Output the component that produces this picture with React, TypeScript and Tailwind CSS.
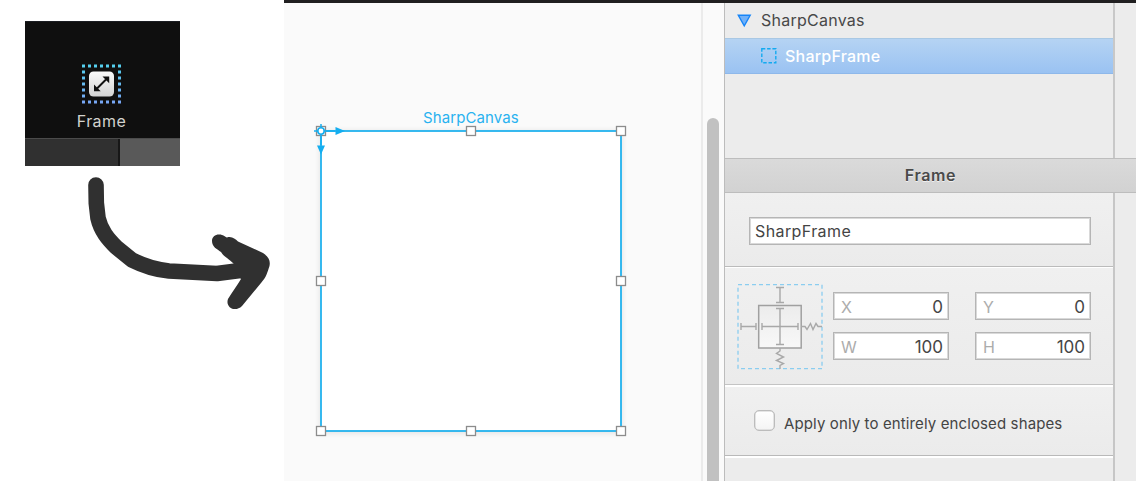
import React from "react";

const DOTS = [0, 6, 12, 18, 24, 30, 36];

function FrameToolIcon() {
  return (
    <svg width="40" height="40" viewBox="0 0 40 40" className="block">
      <defs>
        <linearGradient id="tool" x1="0" y1="0" x2="0" y2="1">
          <stop offset="0" stopColor="#fafafa" />
          <stop offset="1" stopColor="#d2d2d2" />
        </linearGradient>
        <linearGradient id="dots" gradientUnits="userSpaceOnUse" x1="0" y1="0" x2="0" y2="39">
          <stop offset="0" stopColor="#53d2ef" />
          <stop offset="1" stopColor="#78a6f5" />
        </linearGradient>
      </defs>
      {DOTS.map((y) =>
        DOTS.map((x) =>
          x === 0 || x === 36 || y === 0 || y === 36 ? (
            <rect key={`${x}-${y}`} x={x} y={y + 0.5} width="3" height="3" fill="url(#dots)" />
          ) : null
        )
      )}
      <rect x="7" y="7.5" width="25" height="25" rx="4.5" fill="url(#tool)" />
      <path d="M15 24.5 L24 15.5" stroke="#101010" strokeWidth="2" />
      <path d="M12 20.6 V27.3 H18.7 Z M20.5 12.6 H27.2 V19.3 Z" fill="#101010" />
    </svg>
  );
}

function ToolPreview() {
  return (
    <div className="w-[155px] h-[145px] bg-[#0f0f0f] border-t border-[#1b1d22] flex flex-col">
      <div className="h-[116px] flex flex-col items-center pt-[42px] pr-[2px]">
        <FrameToolIcon />
        <span className="mt-[6px] text-[16px] leading-[22px] tracking-[0.45px] text-[#d2d2ce]">Frame</span>
      </div>
      <div className="flex-1 flex border-t border-[#4b4b4b]">
        <div className="w-[93px] bg-[#303030]" />
        <div className="w-[2px] bg-[#171717]" />
        <div className="flex-1 bg-[#595959]" />
      </div>
    </div>
  );
}

function HandDrawnArrow() {
  return (
    <svg width="190" height="140" viewBox="84 174 190 140" className="block ml-[59px] mt-[8px]">
      <path
        d="M96 185 L96.3 203 L98 218 C101 231 108 239 116 247 L132 260 C144 266 158 270 169 271 L217 273.500 L244 270"
        fill="none"
        stroke="#303030"
        strokeWidth="15.6"
        strokeLinecap="round"
        strokeLinejoin="round"
      />
      <path
        d="M219 234.500 C223 234.300 225 237 227 237.500 C232 236 235 239 238 241.500 L263 253 C269 257 270.500 261 269.500 266 C267 273 267 276 261 283 L242 306 C235 313 225 307 228 299 C232 292 237 286 241 279 L229 264 L234 264 C228 258 224 257 221 252 C217 249 212 247 212 241 C212 237 215 234.500 219 234.500 Z"
        fill="#303030"
      />
    </svg>
  );
}

function SelectionHandles() {
  const points = [
    [10, 10], [160, 10], [310, 10],
    [10, 160], [310, 160],
    [10, 310], [160, 310], [310, 310],
  ];
  return (
    <svg width="320" height="320" viewBox="0 0 320 320" className="absolute left-[27px] top-[118px]">
      <rect x="10" y="10" width="300" height="300" fill="none" stroke="#22b2ee" strokeWidth="1.800" />
      {points.map(([x, y]) => (
        <rect key={`${x}-${y}`} x={x - 4.5} y={y - 4.5} width="9" height="9" fill="#fff" stroke="#8c8c8c" strokeWidth="1.300" />
      ))}
      <g fill="#14aef0" stroke="#14aef0">
        <path d="M3 10 H24 M10 3 V24" strokeWidth="1.500" />
        <path d="M24.500 6 L34 10 L24.500 14 Z M6 24.500 L14 24.500 L10 33.500 Z" stroke="none" />
        <circle cx="10" cy="10" r="3.200" fill="#fff" strokeWidth="1.600" />
      </g>
    </svg>
  );
}

function CanvasArea() {
  return (
    <div className="w-[441px] flex-none flex bg-[#fafafa]">
      <div className="w-[419px] relative border-r-2 border-[#ebebeb] overflow-hidden">
        <div className="absolute left-[37px] top-[128px] w-[300px] h-[300px] bg-white shadow-[0_1px_5px_2px_rgba(0,0,0,0.08)]" />
        <span className="absolute left-[139px] top-[104px] text-[15px] leading-[22px] tracking-[0.1px] whitespace-nowrap text-[#29b2f0]">
          SharpCanvas
        </span>
        <SelectionHandles />
      </div>
      <div className="w-[22px] bg-[#fafafa] pt-[115px] pl-[4px] border-r border-[#bcbcbc]">
        <div className="w-[12px] h-full rounded-t-full bg-[#c1c1c1]" />
      </div>
    </div>
  );
}

function ConstraintsDiagram() {
  return (
    <svg width="86" height="86" viewBox="0 0 86 86" className="block shrink-0">
      <defs>
        <linearGradient id="box" x1="0" y1="0" x2="0" y2="1">
          <stop offset="0" stopColor="#ececec" />
          <stop offset="1" stopColor="#f8f8f8" />
        </linearGradient>
      </defs>
      <rect x="1" y="0.700" width="84" height="84" fill="none" stroke="#8bcdf0" strokeWidth="1.300" strokeDasharray="4 3" />
      <rect x="21.700" y="21.500" width="42.500" height="42.500" fill="url(#box)" stroke="#a0a0a0" strokeWidth="1.500" />
      <g fill="none" stroke="#a8a8a8" strokeWidth="1.400">
        <path d="M43 3.500 V18.500 M39 3.500 H47 M39 18.500 H47" />
        <path d="M43 24.500 V60.500 M39 24.500 H47 M39 60.500 H47" />
        <path d="M4 42.500 H19 M4 39 V46 M19 39 V46" />
        <path d="M25 42.500 H61 M25 39 V46 M61 39 V46" />
        <path d="M64 42.500 H68 L70 45.500 L73.500 39.500 L76 45.500 L79 39.500 L81 42.500 H85" />
        <path d="M43 64 V67 L39.500 69.500 L46.500 73 L39.500 76.500 L46.500 79.500 L43 81.500 V85" />
      </g>
    </svg>
  );
}

function NumberField({ label, value }: { label: string; value: string }) {
  return (
    <div className="h-[28px] w-[116px] border border-[#b5b5b5] outline outline-1 -outline-offset-2 outline-[#d9d9d9] bg-white pl-[7px] pr-[5px] flex items-center justify-between text-[17px] leading-[22px]">
      <span className="text-[#acacac] text-[16px] pt-[1px]">{label}</span>
      <span className="text-[#454545] pt-[1px]">{value}</span>
    </div>
  );
}

function LayerList() {
  return (
    <div className="h-[155px] w-[390px] border-r-2 border-[#c8c8c8]">
      <div className="h-[35px] flex items-center pl-[12px]">
        <svg width="15" height="14" viewBox="0 0 15 14" className="block">
          <path d="M1.300 1.300 H13.200 L7.250 11.800 Z" fill="#71b1f8" stroke="#1685f8" strokeWidth="1.400" />
        </svg>
        <span className="ml-[9px] mt-[-2px] text-[16px] leading-[22px] tracking-[0.25px] text-[#484848]">SharpCanvas</span>
      </div>
      <div className="h-[36px] flex items-center pl-[36px] bg-linear-to-b from-[#b5d3f3] to-[#9ac2f2] border-t border-b border-t-[#a9c8e4] border-b-[#8eb8ea]">
        <svg width="16" height="16" viewBox="0 0 16 16" className="block">
          <rect x="0.800" y="0.800" width="14" height="14" fill="none" stroke="#13aaf0" strokeWidth="1.400" strokeDasharray="3.500 1.800" />
        </svg>
        <span className="ml-[8px] mt-[-1px] text-[16px] leading-[22px] tracking-[0.22px] font-medium text-white">SharpFrame</span>
      </div>
    </div>
  );
}

function Inspector() {
  return (
    <div className="w-[411px] flex-none bg-[#ececec] flex flex-col">
      <LayerList />
      <div className="h-[35px] flex-none bg-linear-to-b from-[#dadada] to-[#d2d2d2] border-t border-b border-t-[#bdbdbd] border-b-[#bdbdbd] flex items-center justify-center">
        <span className="mt-[-2px] text-[16px] leading-[22px] font-semibold text-[#4a4a4a] tracking-[0.6px] [text-shadow:0_1px_0_#f0f0f0]">Frame</span>
      </div>
      <div className="w-[390px] flex-1 flex flex-col border-r-2 border-[#c6c6c6]">
        <div className="h-[74px] bg-linear-to-b from-[#f0f0f0] to-[#ebebeb] border-b border-[#bbbbbb] pt-[24px] pl-[24px]">
          <div className="w-[342px] h-[28px] border border-[#b5b5b5] outline outline-1 -outline-offset-2 outline-[#d9d9d9] bg-white pl-[5px] flex items-center text-[16px] leading-[22px] tracking-[0.4px] text-[#444]">
            <span>SharpFrame</span>
          </div>
        </div>
        <div className="h-[118px] bg-linear-to-b from-[#f0f0f0] to-[#ebebeb] border-t border-b border-t-white border-b-[#c4c4c4] pt-[16px] pl-[12px] flex">
          <ConstraintsDiagram />
          <div className="ml-[10px] mt-[8px] grid grid-cols-[116px_116px] gap-x-[26px] gap-y-[12px] content-start">
            <NumberField label="X" value="0" />
            <NumberField label="Y" value="0" />
            <NumberField label="W" value="100" />
            <NumberField label="H" value="100" />
          </div>
        </div>
        <div className="h-[71px] bg-linear-to-b from-[#f0f0f0] to-[#ebebeb] border-t-2 border-b border-t-white border-b-[#b9b9b9] flex items-start pt-[23px] pl-[29px]">
          <div className="w-[21px] h-[21px] rounded-[5px] border-[1.5px] border-[#bcbcbc] shadow-[inset_0_0_0_0.5px_#cccccc] bg-linear-to-b from-white to-[#f4f4f4]" />
          <span className="ml-[9px] mt-[3px] text-[15px] leading-[22px] tracking-[0.12px] text-[#444] whitespace-nowrap">
            Apply only to entirely enclosed shapes
          </span>
        </div>
        <div className="flex-1 border-t-2 border-white" />
      </div>
    </div>
  );
}

export default function App() {
  return (
    <div className="w-[1136px] h-[481px] bg-white flex overflow-hidden font-['Inter','Liberation_Sans',sans-serif]">
      <div className="w-[284px] flex-none pt-[21px]">
        <div className="pl-[25px]">
          <ToolPreview />
          <HandDrawnArrow />
        </div>
      </div>
      <div className="flex-1 flex flex-col">
        <div className="h-[3px] bg-[#201f20]" />
        <div className="flex-1 flex">
          <CanvasArea />
          <Inspector />
        </div>
      </div>
    </div>
  );
}
